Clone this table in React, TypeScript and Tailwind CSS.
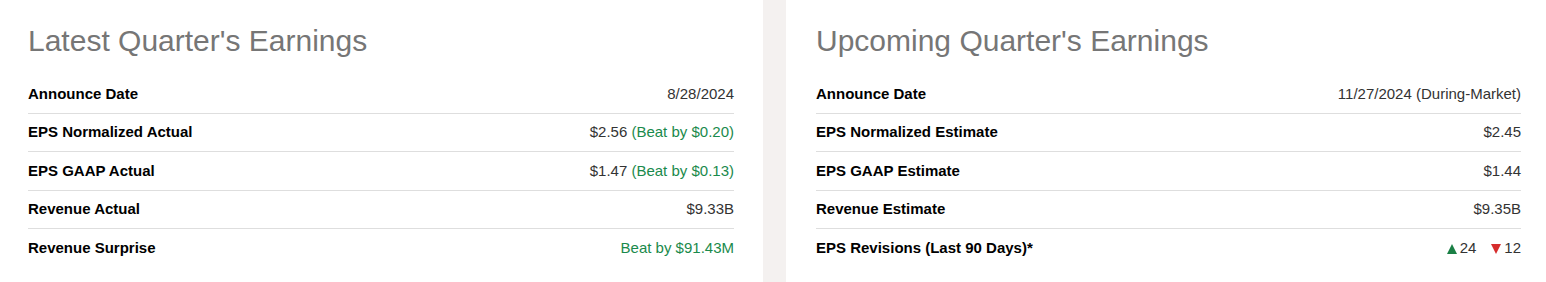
import React from "react";

type Row = { label: string; value: React.ReactNode };

const Up = () => (
  <svg width="10" height="10" viewBox="0 0 10 10" className="inline-block mr-[3px] align-[-1px]">
    <polygon points="5,0 10,10 0,10" fill="#1a7f45" />
  </svg>
);

const Down = () => (
  <svg width="10" height="10" viewBox="0 0 10 10" className="inline-block mr-[3px] align-[-1px]">
    <polygon points="0,0 10,0 5,10" fill="#d62d2d" />
  </svg>
);

const beat = (text: string) => <span className="text-[#1a8a4c]">{text}</span>;

const latest: Row[] = [
  { label: "Announce Date", value: "8/28/2024" },
  { label: "EPS Normalized Actual", value: <>$2.56 {beat("(Beat by $0.20)")}</> },
  { label: "EPS GAAP Actual", value: <>$1.47 {beat("(Beat by $0.13)")}</> },
  { label: "Revenue Actual", value: "$9.33B" },
  { label: "Revenue Surprise", value: beat("Beat by $91.43M") },
];

const upcoming: Row[] = [
  { label: "Announce Date", value: "11/27/2024 (During-Market)" },
  { label: "EPS Normalized Estimate", value: "$2.45" },
  { label: "EPS GAAP Estimate", value: "$1.44" },
  { label: "Revenue Estimate", value: "$9.35B" },
  {
    label: "EPS Revisions (Last 90 Days)*",
    value: (
      <span className="inline-flex items-center">
        <Up />
        24
        <span className="w-[15px]" />
        <Down />
        12
      </span>
    ),
  },
];

const Panel = ({ title, rows, className }: { title: string; rows: Row[]; className: string }) => (
  <section className={`bg-white pt-[23px] ${className}`}>
    <h2 className="text-[30px] leading-[36px] text-[#767676]">{title}</h2>
    <div className="mt-[16px]">
      {rows.map((row, i) => (
        <div
          key={row.label}
          className={`flex items-center justify-between h-[38.6px] text-[15px] ${
            i !== rows.length - 1 ? "border-b border-[#dedede]" : ""
          }`}
        >
          <span className="font-bold text-black">{row.label}</span>
          <span className="text-[#333333]">{row.value}</span>
        </div>
      ))}
    </div>
  </section>
);

export default function App() {
  return (
    <div
      className="flex w-[1546px] h-[282px] bg-[#f4f1f0] gap-[23px]"
      style={{ fontFamily: '"Liberation Sans", Arial, sans-serif' }}
    >
      <Panel title="Latest Quarter's Earnings" rows={latest} className="w-[763px] pl-[28px] pr-[29px]" />
      <Panel title="Upcoming Quarter's Earnings" rows={upcoming} className="w-[760px] pl-[30px] pr-[25px]" />
    </div>
  );
}
